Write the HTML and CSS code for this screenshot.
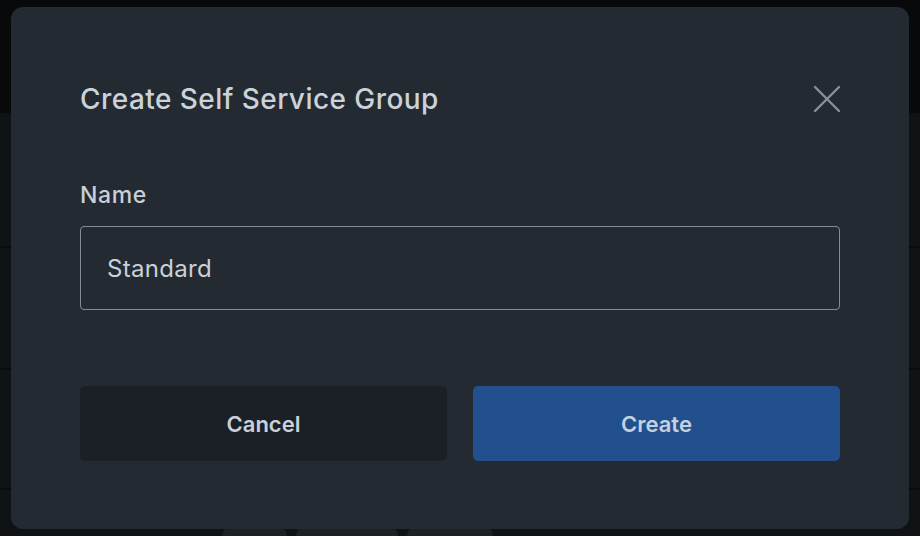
FILE: index.html
```html
<!DOCTYPE html>
<html lang="en">
<head>
    <meta charset="UTF-8">
    <meta name="viewport" content="width=device-width, initial-scale=1.0">
    <title>Create Self Service Group</title>
    <link rel="stylesheet" href="styles.css">
</head>
<body>
    <!-- Page behind the overlay -->
    <div class="page">
        <div class="page-header"></div>
        <div class="page-row row-1"></div>
        <div class="page-row row-2"></div>
        <div class="page-row row-3"></div>
        <div class="page-footer">
            <span class="pill pill-a"></span>
            <span class="pill pill-b"></span>
            <span class="pill pill-c"></span>
        </div>
    </div>

    <!-- Modal -->
    <div class="modal">
        <div class="modal-header">
            <h2>Create Self Service Group</h2>
            <button class="close" aria-label="Close">
                <svg width="28" height="28" viewBox="0 0 28 28">
                    <path d="M2 2 L26 26 M26 2 L2 26" stroke="#8a9099" stroke-width="2.4" stroke-linecap="round" fill="none"/>
                </svg>
            </button>
        </div>

        <label for="groupName" class="field-label">Name</label>
        <input type="text" id="groupName" class="field-input" value="Standard">

        <div class="actions">
            <button class="btn btn-cancel">Cancel</button>
            <button class="btn btn-create">Create</button>
        </div>
    </div>
</body>
</html>
```

FILE: styles.css
```css
* {
    margin: 0;
    padding: 0;
    box-sizing: border-box;
}

body {
    font-family: 'Inter', 'Noto Sans', sans-serif;
    background-color: #0e1114;
    width: 920px;
    height: 536px;
    overflow: hidden;
}

/* Background page */
.page {
    display: flex;
    flex-direction: column;
    height: 536px;
}

.page-header {
    height: 113px;
    background-color: #08090b;
}

.page-row {
    background-color: #101316;
    border-bottom: 2px solid #090b0d;
}

.row-1 {
    height: 135px;
}

.row-2 {
    height: 122px;
}

.row-3 {
    height: 120px;
}

.page-footer {
    flex: 1;
    background-color: #101316;
    display: flex;
    align-items: flex-end;
    padding-left: 222px;
    gap: 9px;
}

.pill {
    display: block;
    height: 10px;
    background-color: #1d2126;
    border-radius: 10px 10px 0 0;
}

.pill-a { width: 65px; }
.pill-b { width: 102px; }
.pill-c { width: 86px; }

/* Modal */
.modal {
    position: absolute;
    left: 11px;
    top: 7px;
    width: 898px;
    height: 522px;
    background-color: #242a32;
    border-radius: 12px;
    padding: 74px 69px 0 69px;
    display: flex;
    flex-direction: column;
}

.modal-header {
    display: flex;
    justify-content: space-between;
    align-items: center;
}

.modal-header h2 {
    font-size: 28px;
    line-height: 36px;
    font-weight: 500;
    letter-spacing: 0.45px;
    color: #cbd2da;
}

.close {
    background: none;
    border: none;
    width: 28px;
    height: 28px;
    margin-right: -1px;
    cursor: pointer;
}

.close svg {
    display: block;
}

.field-label {
    margin-top: 64px;
    font-size: 23px;
    line-height: 28px;
    font-weight: 500;
    letter-spacing: 0.6px;
    color: #c9d0d8;
}

.field-input {
    margin-top: 17px;
    height: 84px;
    width: 100%;
    padding: 0 26px;
    border: 1px solid #868c94;
    border-radius: 4px;
    background-color: #242a32;
    color: #c9d0d8;
    font-family: inherit;
    font-size: 24px;
    letter-spacing: 0.3px;
    outline: none;
}

.actions {
    margin-top: 76px;
    display: flex;
    gap: 26px;
}

.btn {
    flex: 1;
    height: 75px;
    border: none;
    border-radius: 5px;
    font-family: inherit;
    font-size: 22px;
    font-weight: 600;
    cursor: pointer;
}

.btn-cancel {
    background-color: #1b1f26;
    color: #c9d0d8;
}

.btn-create {
    background-color: #21508d;
    color: #c5d0df;
}
```
